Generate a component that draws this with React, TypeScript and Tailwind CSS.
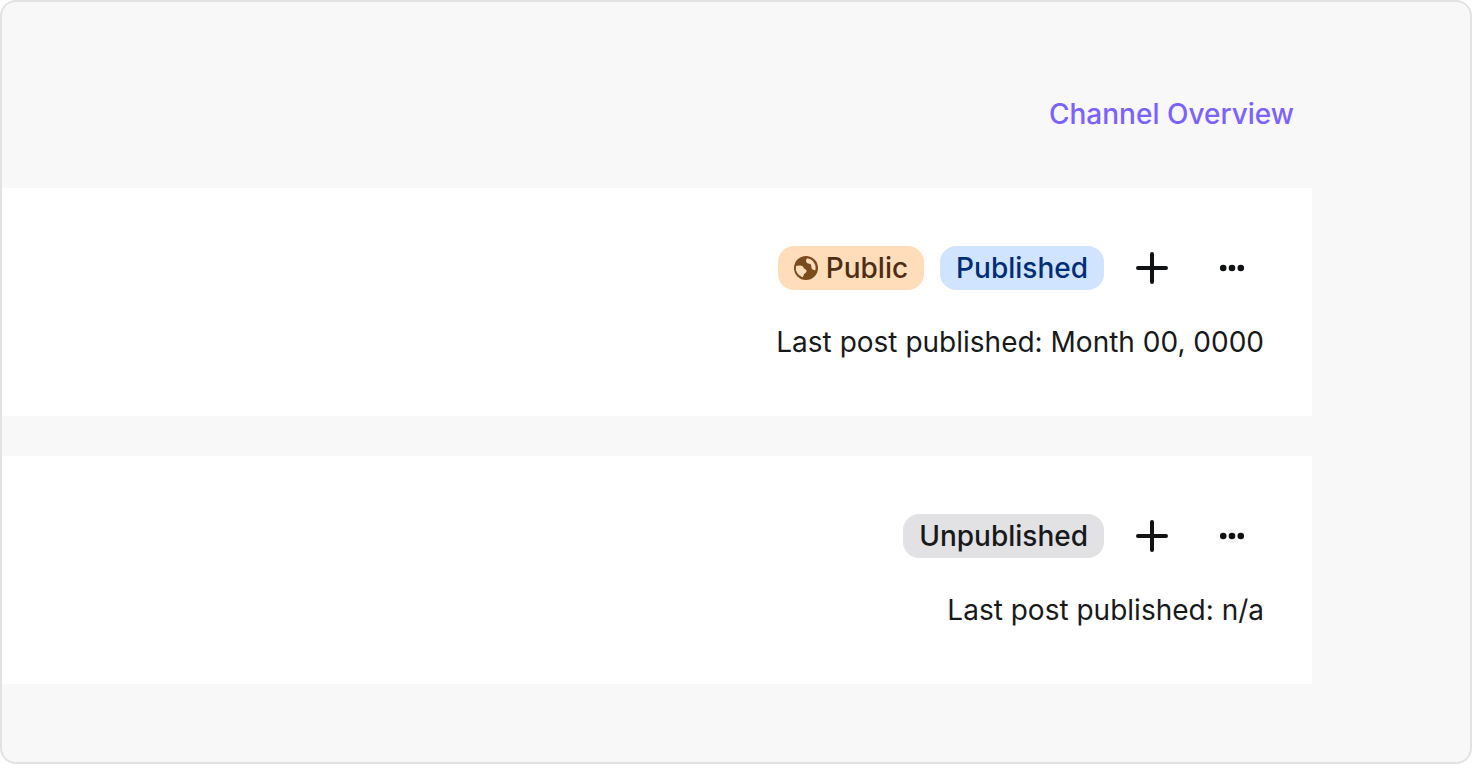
import React from "react";

type BadgeTone = "orange" | "blue" | "gray";

const badgeTones: Record<BadgeTone, string> = {
  orange: "bg-[#ffddba] text-[#4d2d14]",
  blue: "bg-[#d1e4ff] text-[#002d75]",
  gray: "bg-[#e2e2e4] text-[#18191b]",
};

function GlobeIcon() {
  return (
    <svg viewBox="0 0 24 24" className="size-6 shrink-0" aria-hidden="true">
      <circle cx="12" cy="12" r="12" fill="#7a4b1c" />
      <path
        d="M13 2.2C12 3.4 11.8 5 12.4 6.2C13.2 7.8 15 7.2 16.3 8.1C17.6 9 17.1 10.6 17.6 12C18 13.3 19.2 14.2 21.3 14.4A9.9 9.9 0 0 0 13 2.2Z"
        fill="#ffddba"
      />
      <path
        d="M2 10C4 9.3 7.2 9.2 8.6 10.2C9.5 10.9 9.5 12 10.4 12.7C11.4 13.3 12.6 13.7 12.6 15C12.6 16.6 10.8 17 10 18.2C9.4 19.2 9.6 20.4 8.4 21.3A9.9 9.9 0 0 1 2 10Z"
        fill="#ffddba"
      />
    </svg>
  );
}

function PlusIcon() {
  return (
    <svg viewBox="0 0 32 32" className="size-8" aria-hidden="true">
      <path d="M16 2V30M2 16H30" stroke="#111214" strokeWidth="4" strokeLinecap="round" />
    </svg>
  );
}

function MoreIcon() {
  return (
    <svg viewBox="0 0 32 32" className="size-8" fill="#111214" aria-hidden="true">
      <circle cx="7.2" cy="16" r="3.3" />
      <circle cx="16" cy="16" r="3.3" />
      <circle cx="24.8" cy="16" r="3.3" />
    </svg>
  );
}

function Badge({ tone, icon, children }: { tone: BadgeTone; icon?: React.ReactNode; children: React.ReactNode }) {
  return (
    <span className={`flex h-11 items-center gap-2 rounded-2xl px-4 font-medium ${badgeTones[tone]}`}>
      {icon}
      {children}
    </span>
  );
}

function IconButton({ label, children }: { label: string; children: React.ReactNode }) {
  return (
    <button type="button" aria-label={label} className="flex size-16 items-center justify-center rounded-2xl">
      {children}
    </button>
  );
}

function ChannelCard({ badges, lastPost }: { badges: React.ReactNode; lastPost: string }) {
  return (
    <article className="flex flex-col items-end gap-4 bg-white p-12">
      <div className="flex items-center gap-4">
        {badges}
        <IconButton label="Add post">
          <PlusIcon />
        </IconButton>
        <IconButton label="More options">
          <MoreIcon />
        </IconButton>
      </div>
      <p className="leading-[52px]">Last post published: {lastPost}</p>
    </article>
  );
}

export default function App() {
  return (
    <main className="rounded-2xl border-2 border-[#e2e2e2] bg-[#f8f8f8] pt-20 pr-[158px] pb-[78px] font-['Inter',sans-serif] text-[28px] text-[#18191b]">
      <header className="mb-[42px] flex justify-end">
        <a href="#overview" className="px-[18px] leading-[64px] font-medium text-[#7b61ff]">
          Channel Overview
        </a>
      </header>
      <div className="flex flex-col gap-10">
        <ChannelCard
          badges={
            <>
              <Badge tone="orange" icon={<GlobeIcon />}>
                Public
              </Badge>
              <Badge tone="blue">Published</Badge>
            </>
          }
          lastPost="Month 00, 0000"
        />
        <ChannelCard badges={<Badge tone="gray">Unpublished</Badge>} lastPost="n/a" />
      </div>
    </main>
  );
}
